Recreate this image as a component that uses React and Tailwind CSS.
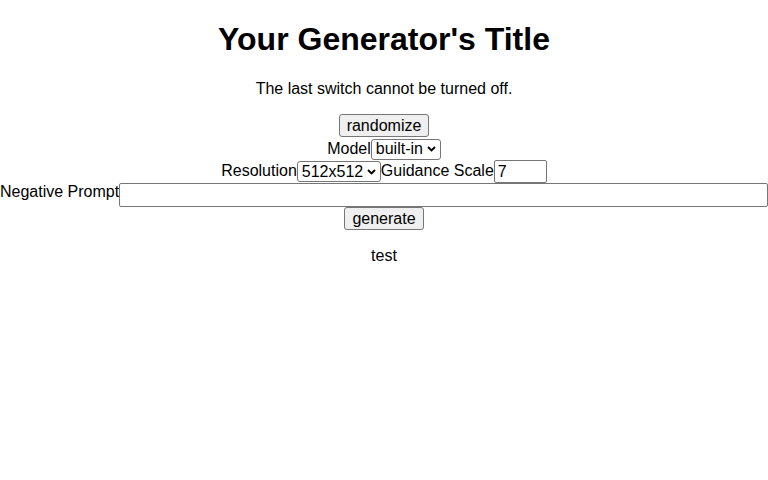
import { useState } from 'react';

function Chevron() {
  return (
    <svg
      className="pointer-events-none absolute right-[5px] top-1/2 -translate-y-1/2"
      width="9"
      height="6"
      viewBox="0 0 9 6"
    >
      <path d="M1 1 L4.5 4.5 L8 1" fill="none" stroke="#000" strokeWidth="1.9" />
    </svg>
  );
}

function Select({ value, options, width, onChange }) {
  return (
    <span className="relative inline-block">
      <select
        value={value}
        onChange={(e) => onChange(e.target.value)}
        className={`${width} h-[21px] appearance-none rounded-[3px] border border-[#767676] bg-white pl-[4px] leading-[18px] text-black`}
      >
        {options.map((o) => (
          <option key={o}>{o}</option>
        ))}
      </select>
      <Chevron />
    </span>
  );
}

export default function App() {
  const [model, setModel] = useState('built-in');
  const [res, setRes] = useState('512x512');
  const [scale, setScale] = useState('7');
  const [neg, setNeg] = useState('');

  const btn =
    'h-[23px] rounded-[3px] border border-[#767676] bg-[#efefef] px-[7px] leading-[18px] text-black';

  return (
    <div className="min-h-[480px] bg-white text-[16px] leading-[1.15] text-black [font-family:'Liberation_Sans',Arial,sans-serif]">
      <h1 className="pt-[21px] text-center text-[32px] font-bold leading-[37px]">
        Your Generator's Title
      </h1>
      <p className="mt-[21px] text-center leading-[19px]">The last switch cannot be turned off.</p>

      <div className="mt-[16px] flex justify-center">
        <button className={btn}>randomize</button>
      </div>

      <div className="flex h-[23px] items-center justify-center pt-[1px]">
        <span>Model</span>
        <Select value={model} options={['built-in']} width="w-[70px]" onChange={setModel} />
      </div>

      <div className="flex h-[23px] items-center justify-center">
        <span>Resolution</span>
        <Select
          value={res}
          options={['512x512', '768x768']}
          width="w-[84px]"
          onChange={setRes}
        />
        <span>Guidance Scale</span>
        <input
          value={scale}
          onChange={(e) => setScale(e.target.value)}
          className="h-[23px] w-[53px] rounded-[2px] border border-[#767676] px-[3px] outline-none"
        />
      </div>

      <div className="flex items-start">
        <span className="whitespace-nowrap">Negative Prompt</span>
        <textarea
          value={neg}
          onChange={(e) => setNeg(e.target.value)}
          className="h-[24px] flex-1 resize-none rounded-[2px] border border-[#767676] px-[2px] outline-none"
        />
      </div>

      <div className="flex justify-center">
        <button className={btn + ' w-[80px] px-0'}>generate</button>
      </div>

      <p className="mt-[16px] text-center leading-[19px]">test</p>
    </div>
  );
}
